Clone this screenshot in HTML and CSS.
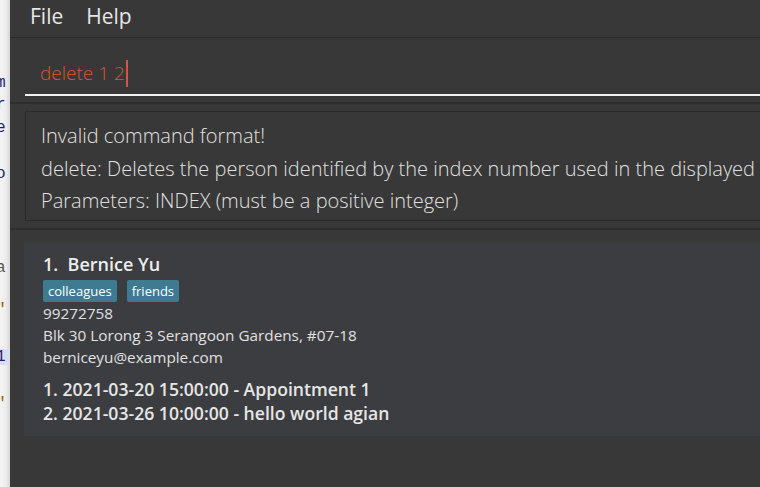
FILE: index.html
```html
<!DOCTYPE html>
<html>
<head>
<meta charset="utf-8">
<link rel="stylesheet" href="styles.css">
</head>
<body>
<div class="desktop">
  <div class="editor-strip">
    <span class="code c1">m</span>
    <span class="code c2">r</span>
    <span class="code c3">e</span>
    <span class="code c4">o</span>
    <span class="code c5">a</span>
    <span class="code c6">"</span>
    <span class="code c7 hl">1</span>
    <span class="code c8">"</span>
  </div>
  <div class="window">
    <div class="menubar">
      <span class="menu-item">File</span>
      <span class="menu-item">Help</span>
    </div>
    <div class="command-pane">
      <div class="command-box">
        <span class="command-text">delete 1 2</span><span class="caret"></span>
      </div>
    </div>
    <div class="result-pane">
      <div class="result-box">
        <p>Invalid command format!</p>
        <p>delete: Deletes the person identified by the index number used in the displayed person list.</p>
        <p>Parameters: INDEX (must be a positive integer)</p>
      </div>
    </div>
    <div class="list-pane">
      <div class="card">
        <div class="name">1.&nbsp;&nbsp;Bernice Yu</div>
        <div class="tags">
          <span class="tag">colleagues</span>
          <span class="tag">friends</span>
        </div>
        <div class="field">99272758</div>
        <div class="field">Blk 30 Lorong 3 Serangoon Gardens, #07-18</div>
        <div class="field">berniceyu@example.com</div>
        <div class="appts">
          <div class="appt">1. 2021-03-20 15:00:00 - Appointment 1</div>
          <div class="appt">2. 2021-03-26 10:00:00 - hello world agian</div>
        </div>
      </div>
    </div>
  </div>
</div>
</body>
</html>
```

FILE: styles.css
```css
html, body {
  margin: 0;
  padding: 0;
  width: 760px;
  height: 487px;
  overflow: hidden;
  background: #383838;
}

.desktop {
  display: flex;
  height: 487px;
}

.editor-strip {
  width: 10px;
  flex: none;
  background: linear-gradient(to right, #f4f4f4 0, #ececec 6px, #d6d6d6 10px);
  position: relative;
  overflow: hidden;
  font-family: "Liberation Mono", monospace;
  font-size: 16px;
  color: #1f1f70;
}

.code {
  position: absolute;
  left: -4px;
  line-height: 16px;
}
.c1 { top: 75px; }
.c2 { top: 97px; }
.c3 { top: 120px; }
.c4 { top: 166px; }
.c5 { top: 260px; color: #555; }
.c6 { top: 302px; color: #a05a00; }
.c7 { top: 349px; }
.c8 { top: 396px; color: #a05a00; }
.hl { background: #dcdcf0; width: 14px; }

.window {
  flex: 1;
  display: flex;
  flex-direction: column;
  background: #383838;
  font-family: "Open Sans", "Noto Sans", sans-serif;
  overflow: hidden;
}

.menubar {
  height: 37px;
  display: flex;
  align-items: center;
  padding-left: 20px;
  background: #383838;
  border-bottom: 1px solid #2c2c2c;
}

.menu-item {
  color: #e6e6e6;
  font-size: 21px;
  margin-right: 23px;
  position: relative;
  top: -3px;
}

.command-pane {
  padding: 16px 0 0 15px;
  height: 66px;
  box-sizing: border-box;
  border-bottom: 2px solid #2e2e2e;
}

.command-box {
  height: 42px;
  border-bottom: 2px solid #f2f2f2;
  display: flex;
  align-items: center;
  padding-left: 15px;
  box-sizing: border-box;
}

.command-text {
  color: #d4573a;
  font-size: 19px;
  font-weight: 300;
  position: relative;
  top: -1px;
}

.caret {
  display: inline-block;
  width: 2px;
  height: 27px;
  background: #d4573a;
  margin-left: 1px;
  position: relative;
  top: -1px;
}

.result-pane {
  padding: 7px 0 7px 15px;
  border-bottom: 2px solid #2e2e2e;
}

.result-box {
  border: 1px solid #2a2a2a;
  border-right: none;
  height: 110px;
  box-sizing: border-box;
  padding: 8px 0 0 15px;
  overflow: hidden;
  white-space: nowrap;
}

.result-box p {
  margin: 0;
  color: #e0e0e0;
  font-size: 20px;
  font-weight: 300;
  line-height: 32.5px;
}

.list-pane {
  padding: 12px 0 0 14px;
}

.card {
  background: #3c3d40;
  height: 194px;
  box-sizing: border-box;
  padding: 10px 0 0 19px;
  color: #e6e6e6;
}

.name {
  font-size: 18px;
  font-weight: 600;
  line-height: 24px;
  color: #ededed;
}

.tags {
  display: flex;
  gap: 10px;
  margin-top: 4px;
}

.tag {
  background: #3e7b91;
  color: #ffffff;
  font-size: 13px;
  line-height: 22px;
  padding: 0 5px;
  border-radius: 2px;
}

.field {
  font-size: 15.3px;
  line-height: 22px;
  color: #e0e0e0;
}

.appts {
  margin-top: 9px;
}

.appt {
  font-size: 17.6px;
  font-weight: 600;
  line-height: 24px;
  color: #e6e6e6;
}
```
